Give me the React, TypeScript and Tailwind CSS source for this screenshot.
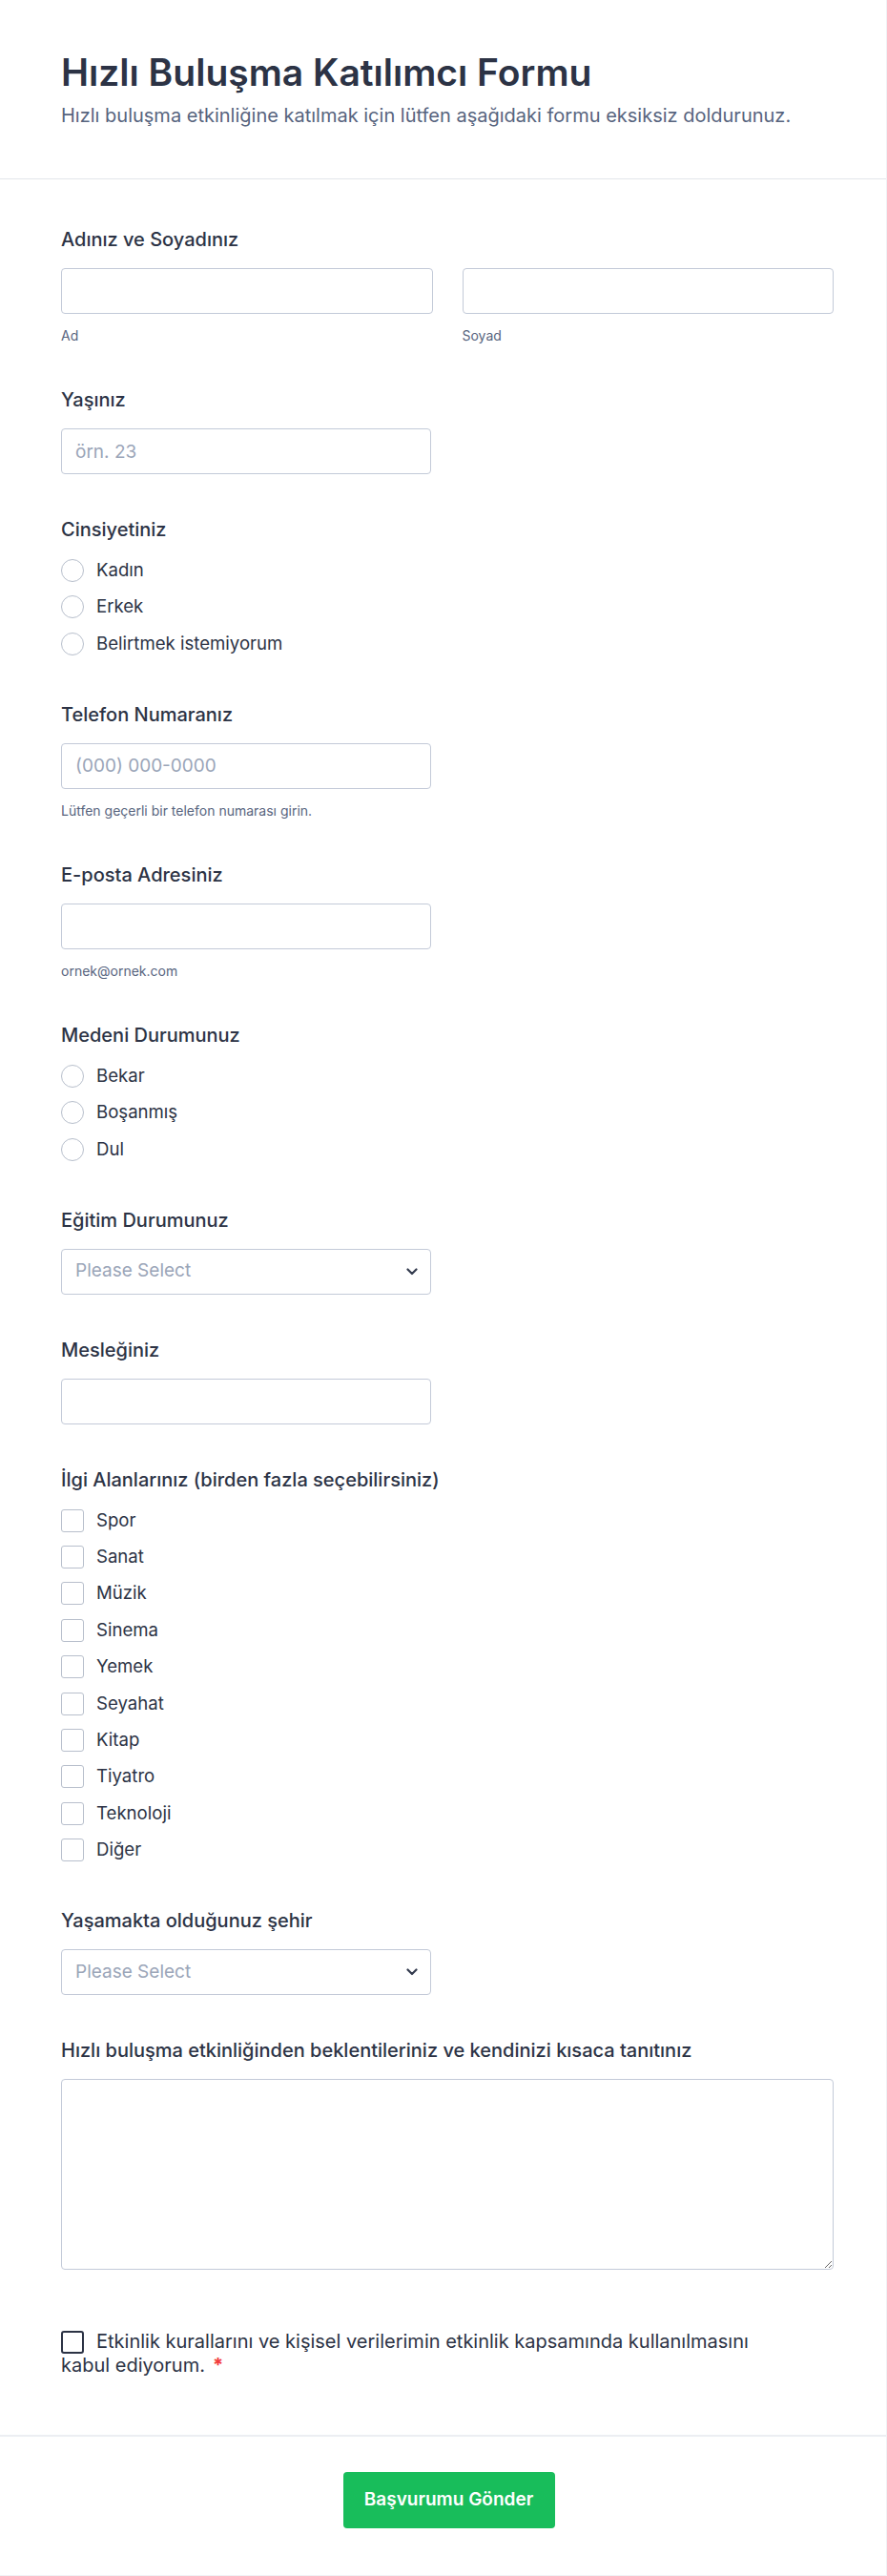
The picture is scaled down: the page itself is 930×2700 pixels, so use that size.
import { useState } from 'react';

const font = { fontFamily: 'Inter, "Noto Sans", sans-serif' };

const interests = ['Spor', 'Sanat', 'Müzik', 'Sinema', 'Yemek', 'Seyahat', 'Kitap', 'Tiyatro', 'Teknoloji', 'Diğer'];

function Label({ children }: { children: React.ReactNode }) {
  return <div className="text-[20px] font-medium leading-6 text-[#2c3345]">{children}</div>;
}

function TextInput({ placeholder, full }: { placeholder?: string; full?: boolean }) {
  return (
    <input
      type="text"
      placeholder={placeholder}
      className={`${full ? 'w-full' : 'w-[388px]'} mt-[18px] h-[48px] rounded-[4px] border border-[#c3cad8] bg-white px-[14px] text-[19px] text-[#2c3345] outline-none placeholder:text-[#9aa5b8]`}
    />
  );
}

function Sublabel({ children }: { children: React.ReactNode }) {
  return <div className="mt-[14px] text-[14px] leading-[18px] text-[#57647e]">{children}</div>;
}

function SelectBox() {
  return (
    <div className="relative mt-[18px] w-[388px]">
      <select className="h-[48px] w-full appearance-none rounded-[4px] border border-[#c3cad8] bg-white px-[14px] text-[19px] text-[#9aa5b8] outline-none">
        <option>Please Select</option>
      </select>
      <svg
        className="pointer-events-none absolute right-[14px] top-1/2 -translate-y-1/2"
        width="12"
        height="8"
        viewBox="0 0 12 8"
        fill="none"
      >
        <path d="M1.5 1.5L6 6L10.5 1.5" stroke="#343c4f" strokeWidth="2.2" strokeLinecap="round" strokeLinejoin="round" />
      </svg>
    </div>
  );
}

function ChoiceList({ items, type, name }: { items: string[]; type: 'radio' | 'checkbox'; name: string }) {
  return (
    <div className="mt-[19px] flex flex-col gap-[14.4px] pb-[4px]">
      {items.map((item) => (
        <label key={item} className="flex h-6 items-center gap-[13px] text-[18.6px] text-[#2c3345]">
          <input
            type={type}
            name={name}
            className={`h-6 w-6 shrink-0 appearance-none border border-[#b8bfcc] bg-white ${
              type === 'radio' ? 'rounded-full' : 'rounded-[3px]'
            }`}
          />
          <span>{item}</span>
        </label>
      ))}
    </div>
  );
}

export default function App() {
  const [agree, setAgree] = useState(false);

  return (
    <div className="min-h-[2700px] w-[930px] border-r border-b border-[#f1f2f5] bg-white" style={font}>
      <header className="border-b border-[#e3e5ea] px-16 pt-[53px] pb-[54px]">
        <h1 className="text-[39px] font-semibold leading-[46px] text-[#2c3345]">Hızlı Buluşma Katılımcı Formu</h1>
        <p className="mt-[10px] text-[20px] leading-6 text-[#57647e]">
          Hızlı buluşma etkinliğine katılmak için lütfen aşağıdaki formu eksiksiz doldurunuz.
        </p>
      </header>

      <form className="flex flex-col gap-[46px] pl-16 pr-[55px] pt-[51px]" onSubmit={(e) => e.preventDefault()}>
        <div>
          <Label>Adınız ve Soyadınız</Label>
          <div className="grid grid-cols-2 gap-[31px]">
            <div>
              <TextInput full />
              <Sublabel>Ad</Sublabel>
            </div>
            <div>
              <TextInput full />
              <Sublabel>Soyad</Sublabel>
            </div>
          </div>
        </div>

        <div>
          <Label>Yaşınız</Label>
          <TextInput placeholder="örn. 23" />
        </div>

        <div>
          <Label>Cinsiyetiniz</Label>
          <ChoiceList type="radio" name="gender" items={['Kadın', 'Erkek', 'Belirtmek istemiyorum']} />
        </div>

        <div>
          <Label>Telefon Numaranız</Label>
          <TextInput placeholder="(000) 000-0000" />
          <Sublabel>Lütfen geçerli bir telefon numarası girin.</Sublabel>
        </div>

        <div>
          <Label>E-posta Adresiniz</Label>
          <TextInput />
          <Sublabel>ornek@ornek.com</Sublabel>
        </div>

        <div>
          <Label>Medeni Durumunuz</Label>
          <ChoiceList type="radio" name="marital" items={['Bekar', 'Boşanmış', 'Dul']} />
        </div>

        <div>
          <Label>Eğitim Durumunuz</Label>
          <SelectBox />
        </div>

        <div>
          <Label>Mesleğiniz</Label>
          <TextInput />
        </div>

        <div>
          <Label>İlgi Alanlarınız (birden fazla seçebilirsiniz)</Label>
          <ChoiceList type="checkbox" name="interests" items={interests} />
        </div>

        <div>
          <Label>Yaşamakta olduğunuz şehir</Label>
          <SelectBox />
        </div>

        <div>
          <Label>Hızlı buluşma etkinliğinden beklentileriniz ve kendinizi kısaca tanıtınız</Label>
          <textarea className="mt-[18px] block h-[200px] w-full rounded-[4px] border border-[#c3cad8] bg-white p-[14px] text-[19px] text-[#2c3345] outline-none" />
        </div>

        <div className="mt-[17px] max-w-[740px] text-[20px] leading-[25px] text-[#2c3345]">
          <input
            type="checkbox"
            checked={agree}
            onChange={() => setAgree(!agree)}
            className="mr-[13px] inline-block h-6 w-6 appearance-none rounded-[3px] border-2 border-[#2c3345] bg-white align-[-6px]"
          />
          Etkinlik kurallarını ve kişisel verilerimin etkinlik kapsamında kullanılmasını kabul ediyorum.
          <span className="ml-[8px] font-bold text-[#f23a3c]">*</span>
        </div>
      </form>

      <div className="mt-[60px] flex justify-center border-t-2 border-[#eceef2] pl-[76px] pr-[64px] pt-[37px]">
        <button
          type="submit"
          className="h-[59px] w-[222px] rounded-[4px] bg-[#18bd5b] text-[19px] font-semibold text-white"
        >
          Başvurumu Gönder
        </button>
      </div>
    </div>
  );
}
